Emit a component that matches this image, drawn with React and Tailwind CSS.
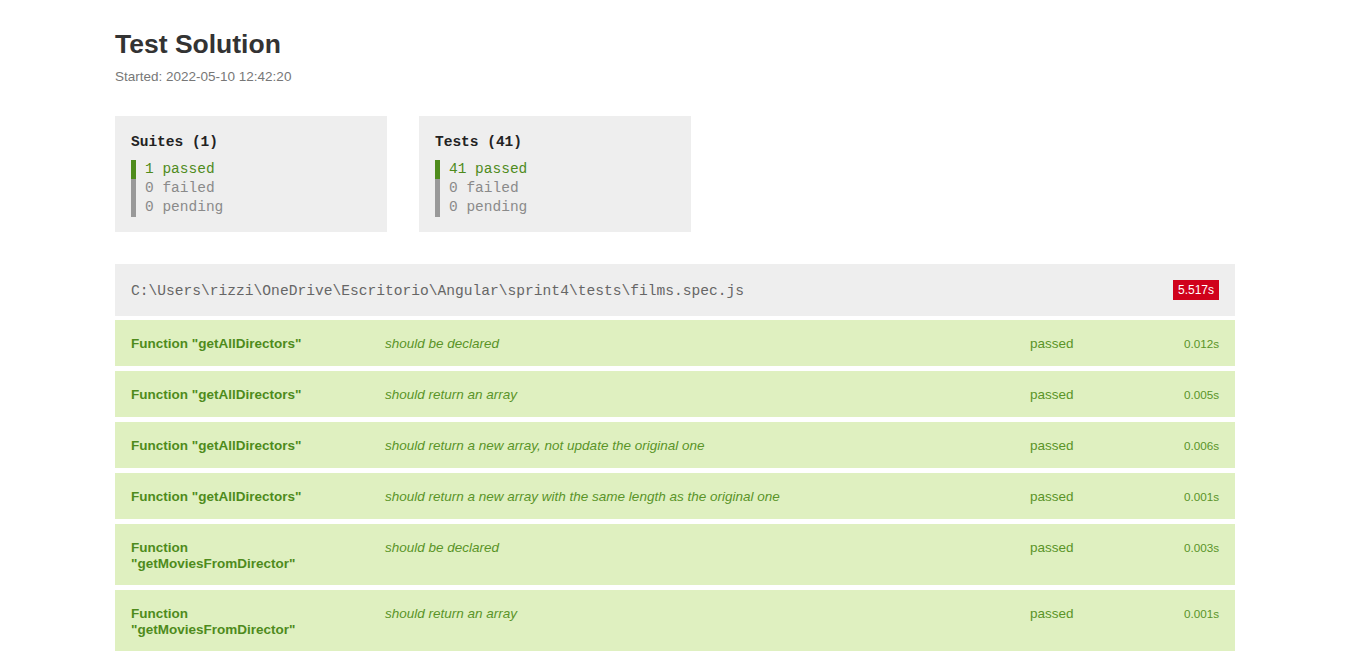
const suites = { title: "Suites (1)", passed: 1, failed: 0, pending: 0 };
const tests = { title: "Tests (41)", passed: 41, failed: 0, pending: 0 };

const rows = [
  { fn: 'Function "getAllDirectors"', name: "should be declared", time: "0.012s" },
  { fn: 'Function "getAllDirectors"', name: "should return an array", time: "0.005s" },
  { fn: 'Function "getAllDirectors"', name: "should return a new array, not update the original one", time: "0.006s" },
  { fn: 'Function "getAllDirectors"', name: "should return a new array with the same length as the original one", time: "0.001s" },
  { fn: 'Function "getMoviesFromDirector"', name: "should be declared", time: "0.003s" },
  { fn: 'Function "getMoviesFromDirector"', name: "should return an array", time: "0.001s" },
];

const mono = "font-['Liberation_Mono','DejaVu_Sans_Mono',monospace]";
const sans = "font-['Liberation_Sans',Arial,sans-serif]";

function SummaryBox({ data }) {
  return (
    <div className={`w-[272px] bg-[#eeeeee] px-4 pt-[17px] pb-[15px] ${mono} text-[14.5px] leading-[19px]`}>
      <div className="font-bold text-[#222]">{data.title}</div>
      <div className="mt-2">
        <div className="border-l-[5px] border-[#4e8b1c] pl-[9px] text-[#4e8b1c]">
          {data.passed} passed
        </div>
        <div className="border-l-[5px] border-[#999] pl-[9px] text-[#8a8a8a]">
          {data.failed} failed
        </div>
        <div className="border-l-[5px] border-[#999] pl-[9px] text-[#8a8a8a]">
          {data.pending} pending
        </div>
      </div>
    </div>
  );
}

export default function App() {
  return (
    <div className={`bg-white min-h-screen ${sans}`}>
      <div className="w-[1120px] ml-[115px] pt-[27px]">
        <h1 className="text-[26.5px] font-bold text-[#333] leading-[34px]">Test Solution</h1>
        <p className="text-[13.5px] text-[#777] leading-[18px] mt-[7px]">
          Started: 2022-05-10 12:42:20
        </p>

        <div className="flex gap-8 mt-[30px]">
          <SummaryBox data={suites} />
          <SummaryBox data={tests} />
        </div>

        <div className="mt-8 h-[52px] bg-[#eeeeee] flex items-center justify-between pl-4 pr-4">
          <span className={`${mono} text-[14.6px] text-[#666] pt-[4px]`}>
            C:\Users\rizzi\OneDrive\Escritorio\Angular\sprint4\tests\films.spec.js
          </span>
          <span className="bg-[#d0021b] text-white text-[12px] leading-[20px] px-[5px]">5.517s</span>
        </div>

        <div className="mt-1 flex flex-col gap-[5px]">
          {rows.map((row, i) => (
            <div
              key={i}
              className="bg-[#dff0c0] min-h-[46px] flex items-start pl-4 pr-4 pt-[16px] pb-[13px] text-[13.5px] leading-4 text-[#4e8b1c]"
            >
              <div className="w-[254px] pr-[36px] font-bold">{row.fn}</div>
              <div className="w-[645px] italic text-[#5a9428]">{row.name}</div>
              <div className="flex-1 text-[#5a9428]">passed</div>
              <div className="text-[11.7px] text-[#5a9428]">{row.time}</div>
            </div>
          ))}
        </div>
      </div>
    </div>
  );
}
